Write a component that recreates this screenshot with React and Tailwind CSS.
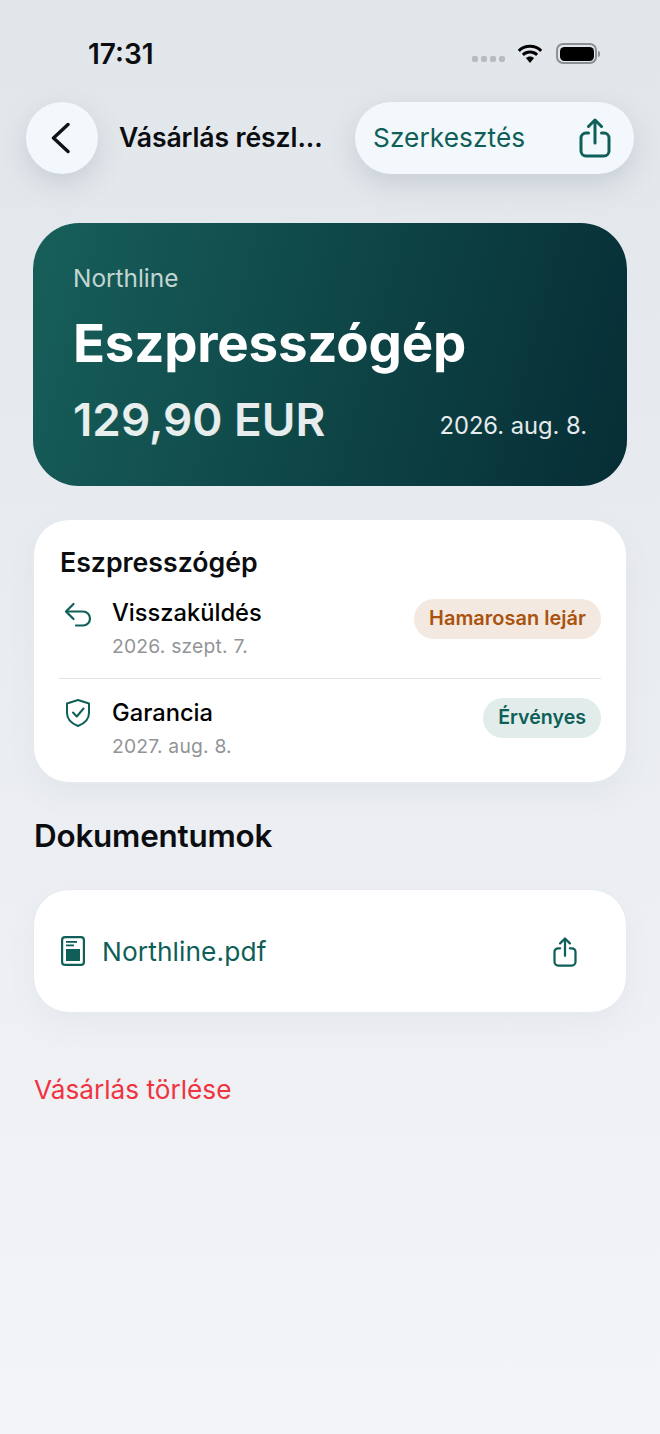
const Share = ({ className }) => (
  <svg viewBox="0 0 32 40" fill="none" stroke="#0f5f58" strokeWidth="3" strokeLinecap="round" strokeLinejoin="round" className={className}>
    <path d="M9.5 15H7a5 5 0 0 0-5 5v13a5 5 0 0 0 5 5h18a5 5 0 0 0 5-5V20a5 5 0 0 0-5-5h-2.500" />
    <path d="M16 25V2.500" />
    <path d="M9.500 8.500 16 2l6.500 6.500" />
  </svg>
);

export default function App() {
  return (
    <div className="w-[660px] h-[1434px] overflow-hidden bg-gradient-to-b from-[#e1e6ea] to-[#f3f4f8] text-black" style={{ fontFamily: "Inter, 'Noto Sans', sans-serif" }}>
      <div className="h-[102px] pt-[37px] flex items-start justify-between pl-[88px] pr-[60px]">
        <div className="text-[28px] leading-[34px] font-semibold text-[#0b0d10]">17:31</div>
        <div className="flex items-center pt-[6px]">
          <div className="flex gap-[3px] mr-[11px] mt-[10px]">
            <span className="w-[6px] h-[6px] rounded-[2px] bg-[#b9bcbf]" />
            <span className="w-[6px] h-[6px] rounded-[2px] bg-[#b9bcbf]" />
            <span className="w-[6px] h-[6px] rounded-[2px] bg-[#b9bcbf]" />
            <span className="w-[6px] h-[6px] rounded-[2px] bg-[#b9bcbf]" />
          </div>
          <svg viewBox="0 0 28 20" className="w-[28px] h-[20px] mr-[12px]" fill="black">
            <path d="M14 3.800c3.900 0 7.500 1.500 10.200 4.100l2-2.200C23 2.500 18.700.7 14 .7S5 2.500 1.800 5.700l2 2.200C6.500 5.300 10.100 3.800 14 3.800z" />
            <path d="M14 9.600c2.300 0 4.500.9 6.100 2.400l2-2.200C19.900 7.800 17.100 6.600 14 6.600s-5.900 1.200-8.100 3.200l2 2.200c1.600-1.500 3.800-2.400 6.100-2.400z" />
            <path d="M14 12.500c-1.600 0-3 .6-4.100 1.600L14 19l4.100-4.900c-1.100-1-2.500-1.600-4.100-1.600z" />
          </svg>
          <div className="w-[41px] h-[21px] rounded-[7px] border-2 border-[#8d9093] p-[1.500px]">
            <div className="w-full h-full rounded-[4.500px] bg-black" />
          </div>
          <div className="w-[2px] h-[6px] rounded-r-[2px] bg-[#8d9093] ml-[1px]" />
        </div>
      </div>

      <div className="h-[72px] ml-[26px] mr-[26px] flex items-center">
        <div className="w-[72px] h-[72px] shrink-0 rounded-full bg-[#f3f8fc] flex items-center justify-center shadow-[0_10px_28px_rgba(90,105,120,0.2)]">
          <svg viewBox="0 0 20 32" className="w-[20px] h-[32px] mr-[4px]" fill="none" stroke="#101215" strokeWidth="3.400" strokeLinecap="round" strokeLinejoin="round">
            <path d="M18 2.500 3.500 16 18 29.500" />
          </svg>
        </div>
        <div className="ml-[21px] w-[215px] shrink-0 text-[26.600px] font-semibold whitespace-nowrap text-[#0b0d10] tracking-[-0.1px]">Vásárlás részl...</div>
        <div className="ml-auto w-[279px] h-[72px] rounded-full bg-[#f3f8fc] flex items-center justify-between pl-[18px] pr-[23px] text-[#0f5f58] shadow-[0_10px_28px_rgba(90,105,120,0.2)]">
          <span className="text-[26.200px] tracking-[0.1px]">Szerkesztés</span>
          <Share className="w-[32px] h-[40px]" />
        </div>
      </div>

      <div className="mx-[33px] mt-[49px]">
        <div className="h-[263px] rounded-[46px] bg-[linear-gradient(105deg,#175f5a,#062d35)] pl-[40px] pr-[40px] pt-[40px] flex flex-col">
          <div className="text-[24.400px] leading-[30px] text-white/75">Northline</div>
          <div className="text-[52.800px] leading-[60px] font-bold text-white mt-[20px] tracking-[-0.2px]">Eszpresszógép</div>
          <div className="flex items-center justify-between mt-[21px]">
            <span className="text-[45.800px] leading-[52px] font-semibold text-white/90">129,90 EUR</span>
            <span className="text-[23.700px] leading-[30px] text-white/90 mt-[12px]">2026. aug. 8.</span>
          </div>
        </div>

        <div className="mt-[33px] h-[264px] rounded-[36px] bg-white border border-[#e6e9ed] shadow-[0_12px_30px_rgba(100,115,130,0.06)] pl-[25px] pr-[25px] pt-[25px]">
          <div className="text-[26.700px] leading-[34px] font-semibold text-[#0b0d10] ml-[1px]">Eszpresszógép</div>
          <div className="flex items-start justify-between h-[96px] border-b border-[#dfe2e6] mt-[4px] pt-[15px]">
            <div className="flex items-start">
              <svg viewBox="0 0 28 26" className="w-[28px] h-[26px] ml-[5px] mt-[4px]" fill="none" stroke="#0f5f58" strokeWidth="2.200" strokeLinecap="round" strokeLinejoin="round">
                <path d="M9.500 2 2 9.500 9.500 17" />
                <path d="M2.500 9.500H19a7 7 0 0 1 0 14h-7" />
              </svg>
              <div className="ml-[20px]">
                <div className="text-[23.700px] leading-[30px] font-medium">Visszaküldés</div>
                <div className="text-[19.300px] leading-[26px] text-[#929497] mt-[5px] tracking-[0.2px]">2026. szept. 7.</div>
              </div>
            </div>
            <div className="h-[40px] mt-[1px] rounded-full bg-[#f4e9e0] px-[15px] flex items-center text-[19.900px] tracking-[0.05px] font-semibold text-[#a9530f]">Hamarosan lejár</div>
          </div>
          <div className="flex items-start justify-between pt-[20px]">
            <div className="flex items-start">
              <svg viewBox="0 0 26 30" className="w-[26px] h-[30px] ml-[6px] -mt-[1px]" fill="none" stroke="#0f5f58" strokeWidth="2" strokeLinecap="round" strokeLinejoin="round">
                <path d="M13 2 24 5.500V15c0 6.500-4.500 10.500-11 13C6.500 25.500 2 21.500 2 15V5.500z" />
                <path d="m8 14.500 3.800 4L18.500 10.500" />
              </svg>
              <div className="ml-[21px] -mt-[1px]">
                <div className="text-[23.700px] leading-[30px] font-medium">Garancia</div>
                <div className="text-[19.300px] leading-[26px] text-[#929497] mt-[5px] tracking-[0.2px]">2027. aug. 8.</div>
              </div>
            </div>
            <div className="h-[40px] -mt-[1px] rounded-full bg-[#e2edeb] px-[15px] flex items-center text-[19.600px] font-semibold text-[#0f5f58]">Érvényes</div>
          </div>
        </div>

        <div className="text-[31.400px] leading-[40px] font-semibold mt-[33px] ml-[1px] text-[#0b0d10] tracking-[-0.2px]">Dokumentumok</div>

        <div className="mt-[33px] h-[124px] rounded-[36px] bg-white border border-[#e6e9ed] shadow-[0_12px_30px_rgba(100,115,130,0.06)] flex items-center justify-between pl-[27px] pr-[49px]">
          <div className="flex items-center">
            <svg viewBox="0 0 24 30" className="w-[24px] h-[30px]" fill="none">
              <rect x="1.100" y="1.100" width="21.800" height="27.800" rx="3" stroke="#0f5f58" strokeWidth="2.200" />
              <rect x="5" y="5" width="11" height="1.800" fill="#0f5f58" />
              <rect x="5" y="8.500" width="8" height="1.800" fill="#0f5f58" />
              <rect x="5" y="13" width="14" height="12" fill="#0f5f58" />
            </svg>
            <span className="ml-[17px] mt-[2px] text-[26.300px] text-[#0f5f58] tracking-[0.1px]">Northline.pdf</span>
          </div>
          <Share className="w-[24px] h-[30px] mt-[2px]" />
        </div>

        <div className="mt-[60px] ml-[1px] text-[26.200px] leading-[34px] text-[#f0343f]">Vásárlás törlése</div>
      </div>
    </div>
  );
}
